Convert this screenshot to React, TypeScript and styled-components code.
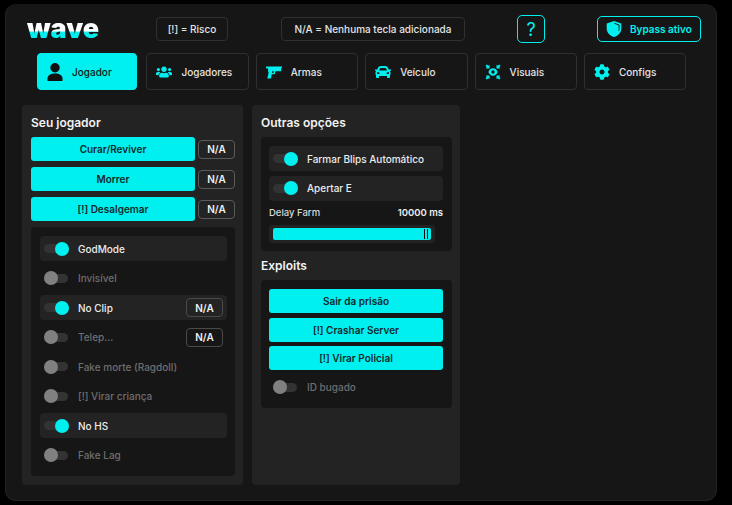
import React from "react";
import styled, { createGlobalStyle } from "styled-components";
import { FaUsers, FaCar, FaCog } from "react-icons/fa";

const cyan = "#00f0f0";

const GlobalStyle = createGlobalStyle`
  html, body {
    margin: 0;
    padding: 0;
    background: #000;
    font-family: "Inter", "Liberation Sans", sans-serif;
  }
  * { box-sizing: border-box; }
`;

const Page = styled.div`
  width: 732px;
  height: 505px;
  padding: 4px 15px 4px 5px;
`;

const Window = styled.div`
  width: 712px;
  height: 497px;
  background: #161616;
  border: 1px solid #222;
  border-top-color: #161616;
  border-radius: 11px;
  padding: 10px 15px 0 16px;
`;

const Header = styled.header`
  display: flex;
  align-items: center;
  height: 28px;
  padding-left: 5px;
`;

const Logo = styled.div`
  width: 129px;
  font-size: 27px;
  font-weight: 900;
  line-height: 26px;
  background: linear-gradient(#fff 0, #fff 56%, ${cyan} 64%, ${cyan} 100%);
  -webkit-background-clip: text;
  background-clip: text;
  color: transparent;
`;

const Pill = styled.div<{ $w: number; $mr: number }>`
  width: ${(p) => p.$w}px;
  height: 24px;
  margin-right: ${(p) => p.$mr}px;
  display: flex;
  align-items: center;
  justify-content: center;
  border: 1px solid #303030;
  border-radius: 4px;
  color: #e4e4e4;
  font-size: 10px;
  font-weight: 500;
  white-space: nowrap;
`;

const HelpButton = styled.div`
  width: 28px;
  height: 28px;
  margin-right: 52px;
  display: flex;
  align-items: center;
  justify-content: center;
  border: 1px solid ${cyan};
  border-radius: 5px;
  color: ${cyan};
  font-size: 18px;
  font-weight: 400;
`;

const BypassBadge = styled.div`
  width: 104px;
  height: 26px;
  display: flex;
  align-items: center;
  gap: 8px;
  padding-left: 8px;
  border: 1px solid ${cyan};
  border-radius: 5px;
  color: ${cyan};
  font-size: 10px;
  font-weight: 600;
  white-space: nowrap;
`;

const Nav = styled.nav`
  display: flex;
  gap: 7px;
  margin: 10px 0 0 15px;
`;

const NavItem = styled.div<{ $active?: boolean }>`
  width: ${(p) => (p.$active ? "100px" : "102.4px")};
  margin-right: ${(p) => (p.$active ? "2.4px" : "0")};
  height: 37px;
  display: flex;
  align-items: center;
  gap: 9px;
  padding-left: 9px;
  border-radius: 4px;
  border: 1px solid ${(p) => (p.$active ? cyan : "#303030")};
  background: ${(p) => (p.$active ? cyan : "transparent")};
  color: ${(p) => (p.$active ? "#161616" : "#e4e4e4")};
  font-size: 10px;
  font-weight: 500;
  svg {
    flex: none;
    width: 16px;
    height: 16px;
    color: ${(p) => (p.$active ? "#111" : cyan)};
  }
`;

const Columns = styled.main`
  display: flex;
  gap: 9px;
  margin-top: 15px;
`;

const Panel = styled.section<{ $w: number }>`
  width: ${(p) => p.$w}px;
  height: 380px;
  padding: 9px 8px 9px 9px;
  background: #232323;
  border-radius: 4px;
`;

const Title = styled.h2<{ $top?: number }>`
  margin: ${(p) => p.$top ?? 0}px 0 6px;
  height: 17px;
  color: #f2f2f2;
  font-size: 12px;
  font-weight: 600;
  line-height: 17px;
`;

const ActionRow = styled.div`
  display: flex;
  align-items: center;
  gap: 3px;
  height: 24px;
  margin-bottom: 6px;
`;

const CyanButton = styled.div`
  height: 24px;
  flex: none;
  display: flex;
  align-items: center;
  justify-content: center;
  background: ${cyan};
  border-radius: 3px;
  color: #12292b;
  font-size: 10px;
  font-weight: 600;
  white-space: nowrap;
`;

const ActionButton = styled(CyanButton)`
  flex: 1;
`;

const KeyBadge = styled.div`
  flex: none;
  width: 37px;
  height: 19px;
  display: flex;
  align-items: center;
  justify-content: center;
  border: 1px solid #5a5a5a;
  border-radius: 4px;
  color: #f0f0f0;
  font-size: 10px;
  font-weight: 600;
`;

const Inner = styled.div<{ $h: number; $pl: number }>`
  height: ${(p) => p.$h}px;
  padding: 9px ${(p) => 17 - p.$pl}px 9px ${(p) => p.$pl}px;
  background: #161616;
  border-radius: 4px;
`;

const ToggleList = styled.div`
  display: flex;
  flex-direction: column;
  gap: 4.5px;
`;

const ToggleRow = styled.div<{ $on: boolean }>`
  height: 25px;
  flex: none;
  display: flex;
  align-items: center;
  gap: 10px;
  padding: 0 4px;
  border-radius: 4px;
  background: ${(p) => (p.$on ? "#232323" : "transparent")};
  color: ${(p) => (p.$on ? "#ececec" : "#6e6e6e")};
  font-size: 10px;
  font-weight: 500;
  white-space: nowrap;
`;

const ToggleTrack = styled.span`
  position: relative;
  flex: none;
  width: 24px;
  height: 9px;
  background: #333;
  border-radius: 5px;
`;

const ToggleKnob = styled.span<{ $on: boolean }>`
  position: absolute;
  top: -2.5px;
  left: ${(p) => (p.$on ? "10.500px" : "0")};
  width: 14px;
  height: 14px;
  border-radius: 50%;
  background: ${(p) => (p.$on ? cyan : "#808080")};
`;

const RowBadge = styled(KeyBadge)`
  margin-left: auto;
  border-color: #4a4a4a;
`;

const DelayRow = styled.div`
  display: flex;
  justify-content: space-between;
  margin-top: 5px;
  height: 14px;
  color: #d8d8d8;
  font-size: 9.5px;
  font-weight: 500;
  line-height: 14px;
  b {
    font-weight: 600;
    color: #eee;
  }
`;

const SliderTrack = styled.div`
  width: 166px;
  height: 18px;
  margin-top: 5px;
  padding: 3px 4px;
  background: #232323;
  border-radius: 4px;
`;

const SliderFill = styled.div`
  position: relative;
  height: 12px;
  background: ${cyan};
  border-radius: 2px;
`;

const SliderGrip = styled.span`
  position: absolute;
  top: 1px;
  right: 3px;
  width: 4px;
  height: 10px;
  border-left: 1px solid #111;
  border-right: 1px solid #111;
`;

const UserIcon = () => (
  <svg viewBox="0 0 16 18" fill="currentColor" style={{ height: 18 }}>
    <circle cx="8" cy="4.700" r="4.700" />
    <path d="M.5 18v-2.500C.5 12.500 3.500 10.500 8 10.500s7.500 2 7.500 5V18z" />
  </svg>
);

const PistolIcon = () => (
  <svg viewBox="0 0 16 16" fill="currentColor">
    <path d="M0 2.500h16v1.300l-.8.4v3H9.500l-.6 2.200c-.2.6-.6.9-1.200.9H5.700L5 14.500H1.300l1.300-5.800c.1-.5 0-.8-.5-1V4.800L0 4.200zM6.300 7.200 6 9h1.100c.2 0 .3-.1.400-.3l.4-1.500z" />
  </svg>
);

const VisualIcon = () => (
  <svg viewBox="0 0 16 16" fill="currentColor">
    <path
      fillRule="evenodd"
      d="M8 4.300c2.200 0 4 1.700 4.600 3.700-.6 2-2.400 3.700-4.600 3.700S4 10 3.400 8C4 6 5.800 4.300 8 4.300zm0 2a1.700 1.700 0 1 0 0 3.400 1.700 1.700 0 0 0 0-3.400z"
    />
    <path d="M.5 1.500 2 .5l1.200 1.200L4.500.8v3.700H.8l.9-1.300zM15.500 1.500 14 .5l-1.200 1.200-1.300-.9v3.700h3.700l-.9-1.300zM.5 14.500l1.500 1 1.200-1.200 1.300.9v-3.700H.8l.9 1.300zM15.500 14.500l-1.500 1-1.200-1.200-1.300.9v-3.700h3.700l-.9 1.300z" />
  </svg>
);

const ShieldIcon = () => (
  <svg viewBox="0 0 16 16" width="16" height="16">
    <path fill="currentColor" d="M8 0l7.300 2.500v5C15.300 11.500 12.500 14.600 8 16 3.500 14.600.7 11.500.7 7.500v-5z" />
    <path fill="none" stroke="#161616" strokeWidth="1" d="M8.500 2.400l4.600 1.600v3.500c0 .8-.1 1.500-.4 2.200" />
  </svg>
);

const NAV = [
  { label: "Jogador", icon: <UserIcon />, active: true },
  { label: "Jogadores", icon: <FaUsers /> },
  { label: "Armas", icon: <PistolIcon /> },
  { label: "Veículo", icon: <FaCar /> },
  { label: "Visuais", icon: <VisualIcon /> },
  { label: "Configs", icon: <FaCog /> },
];

const ACTIONS = ["Curar/Reviver", "Morrer", "[!] Desalgemar"];

const TOGGLES = [
  { label: "GodMode", on: true },
  { label: "Invisível", on: false },
  { label: "No Clip", on: true, badge: true },
  { label: "Telep...", on: false, badge: true },
  { label: "Fake morte (Ragdoll)", on: false },
  { label: "[!] Virar criança", on: false },
  { label: "No HS", on: true },
  { label: "Fake Lag", on: false },
];

const Toggle: React.FC<{ label: string; on: boolean; badge?: boolean }> = ({ label, on, badge }) => (
  <ToggleRow $on={on}>
    <ToggleTrack>
      <ToggleKnob $on={on} />
    </ToggleTrack>
    {label}
    {badge && <RowBadge>N/A</RowBadge>}
  </ToggleRow>
);

export default function App() {
  return (
    <Page>
      <GlobalStyle />
      <Window>
        <Header>
          <Logo>wave</Logo>
          <Pill $w={72} $mr={53}>[!] = Risco</Pill>
          <Pill $w={184} $mr={52}>N/A = Nenhuma tecla adicionada</Pill>
          <HelpButton>?</HelpButton>
          <BypassBadge>
            <ShieldIcon />
            Bypass ativo
          </BypassBadge>
        </Header>
        <Nav>
          {NAV.map((item) => (
            <NavItem key={item.label} $active={item.active}>
              {item.icon}
              {item.label}
            </NavItem>
          ))}
        </Nav>
        <Columns>
          <Panel $w={221}>
            <Title>Seu jogador</Title>
            {ACTIONS.map((label) => (
              <ActionRow key={label}>
                <ActionButton>{label}</ActionButton>
                <KeyBadge>N/A</KeyBadge>
              </ActionRow>
            ))}
            <Inner $h={249} $pl={9}>
              <ToggleList>
                {TOGGLES.map((t) => (
                  <Toggle key={t.label} {...t} />
                ))}
              </ToggleList>
            </Inner>
          </Panel>
          <Panel $w={208}>
            <Title>Outras opções</Title>
            <Inner $h={114} $pl={8}>
              <ToggleList>
                <Toggle label="Farmar Blips Automático" on />
                <Toggle label="Apertar E" on />
              </ToggleList>
              <DelayRow>
                <span>Delay Farm</span>
                <b>10000 ms</b>
              </DelayRow>
              <SliderTrack>
                <SliderFill>
                  <SliderGrip />
                </SliderFill>
              </SliderTrack>
            </Inner>
            <Title $top={6}>Exploits</Title>
            <Inner $h={128} $pl={8}>
              <ToggleList>
                <CyanButton>Sair da prisão</CyanButton>
                <CyanButton>[!] Crashar Server</CyanButton>
                <CyanButton>[!] Virar Policial</CyanButton>
                <Toggle label="ID bugado" on={false} />
              </ToggleList>
            </Inner>
          </Panel>
        </Columns>
      </Window>
    </Page>
  );
}
